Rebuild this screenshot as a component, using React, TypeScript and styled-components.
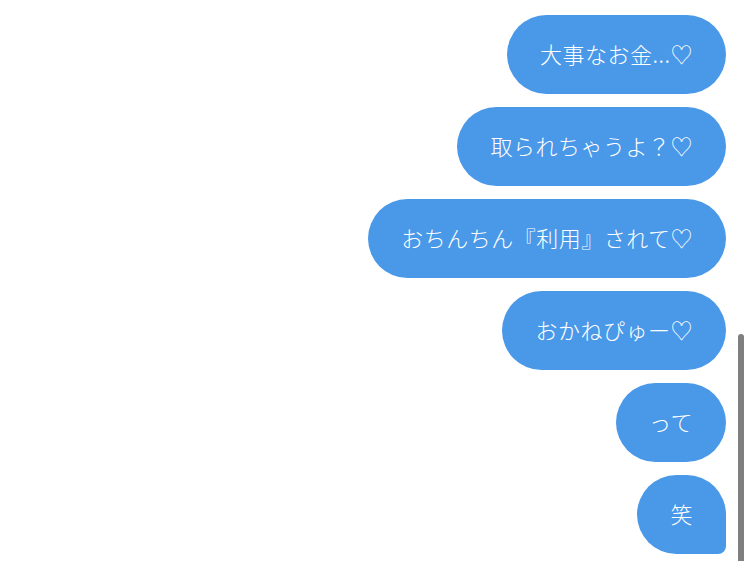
import styled, { createGlobalStyle } from "styled-components";

const GlobalStyle = createGlobalStyle`
  html, body {
    margin: 0;
    padding: 0;
    background: #ffffff;
    overflow: hidden;
  }
  body {
    font-family: "Noto Sans CJK JP", "Noto Sans", sans-serif;
  }
`;

const Thread = styled.div`
  display: flex;
  flex-direction: column;
  align-items: flex-end;
  gap: 13px;
  padding: 15px 24px 0 0;
  height: 561px;
  box-sizing: border-box;
`;

const Bubble = styled.div<{ $tail?: boolean }>`
  box-sizing: border-box;
  height: 79px;
  display: flex;
  align-items: center;
  padding: 0 33px 4px;
  background: #4a98e8;
  color: #ffffff;
  font-size: 22px;
  font-weight: 300;
  letter-spacing: 0.5px;
  line-height: 1;
  white-space: nowrap;
  border-radius: ${(p) => (p.$tail ? "40px 40px 8px 40px" : "40px")};
`;

// overlay scroll thumb pinned to the right edge
const ScrollThumb = styled.div`
  position: fixed;
  right: 6px;
  top: 334px;
  bottom: 0;
  width: 6px;
  background: #7f7f7f;
  border-radius: 3px 3px 0 0;
`;

const messages = [
  "大事なお金...♡",
  "取られちゃうよ？♡",
  "おちんちん『利用』されて♡",
  "おかねぴゅー♡",
  "って",
  "笑",
];

export default function App() {
  return (
    <>
      <GlobalStyle />
      <Thread>
        {messages.map((text, i) => (
          <Bubble key={i} $tail={i === messages.length - 1}>
            {text}
          </Bubble>
        ))}
      </Thread>
      <ScrollThumb />
    </>
  );
}
